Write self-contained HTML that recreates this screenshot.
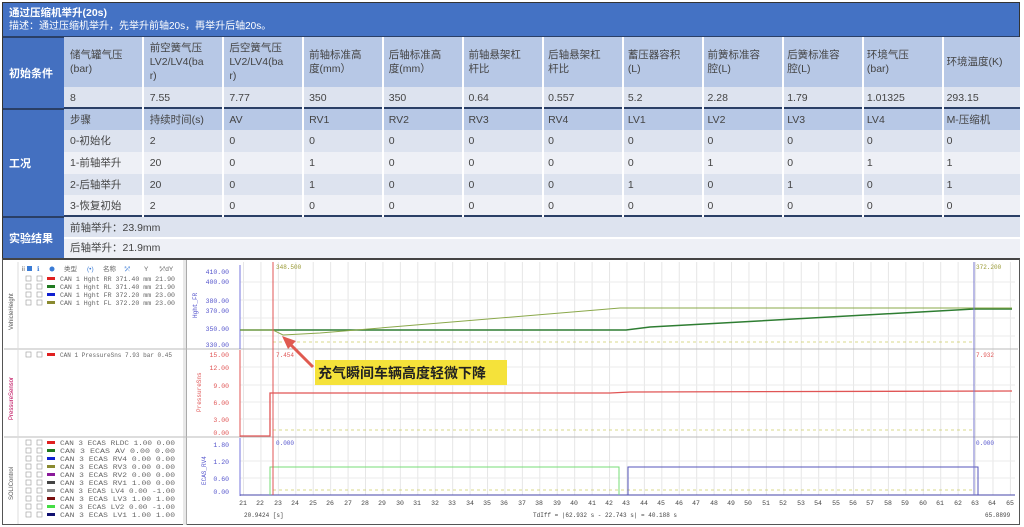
<!DOCTYPE html>
<html><head><meta charset="utf-8"><style>
*{margin:0;padding:0;box-sizing:border-box}
body{width:1024px;height:527px;background:#fff;position:relative;overflow:hidden;font-family:"Liberation Sans","Noto Sans CJK SC",sans-serif}
.t{position:absolute;left:2px;top:2px;width:1018px;height:256px;border:1px solid #333;background:#eef0f6}
.hd{position:absolute;left:0;top:0;width:1016px;height:35px;background:#4472c4;color:#fff;font-size:10px;line-height:13px;padding:4px 6px;border-bottom:2px solid #2a3f66}
.hd b{font-size:10.5px}
.lb{position:absolute;left:0;width:62px;background:#4470c0;color:#fff;font-size:11px;font-weight:bold;display:flex;align-items:center;padding-left:6px;border-bottom:2px solid #2a3f66}
</style></head><body>
<div class="t">
<div class="hd"><b>通过压缩机举升(20s)</b><br>描述：通过压缩机举升，先举升前轴20s，再举升后轴20s。</div>
<div class="lb" style="top:35px;height:72px">初始条件</div>
<div class="lb" style="top:107px;height:108px">工况</div>
<div class="lb" style="top:215px;height:40px;border-bottom:none">实验结果</div>
</div>
<div style="position:absolute;left:2px;top:258px;width:1018px;height:267px;border:1px solid #555;border-top:2px solid #444"></div>
<svg style="position:absolute;left:0;top:0" width="1024" height="527" font-family="Liberation Mono,monospace">
<defs>
<pattern id="vg" x="243" y="0" width="17.43" height="10" patternUnits="userSpaceOnUse"><line x1="0.5" y1="0" x2="0.5" y2="10" stroke="#e6e6e6" stroke-width="1"/></pattern>
</defs>
<rect x="186" y="260" width="1" height="265" fill="#aaa"/>
<rect x="183" y="260" width="3" height="265" fill="#e8e8e8"/>
<rect x="240" y="262" width="775" height="233" fill="url(#vg)"/>
<g stroke="#ebebeb">
<line x1="240" y1="282" x2="1015" y2="282"/><line x1="240" y1="300" x2="1015" y2="300"/><line x1="240" y1="318" x2="1015" y2="318"/><line x1="240" y1="336" x2="1015" y2="336"/>
<line x1="240" y1="367" x2="1015" y2="367"/><line x1="240" y1="385" x2="1015" y2="385"/><line x1="240" y1="402" x2="1015" y2="402"/><line x1="240" y1="419" x2="1015" y2="419"/>
<line x1="240" y1="461" x2="1015" y2="461"/><line x1="240" y1="478" x2="1015" y2="478"/>
</g>
<g stroke="#bbb"><line x1="4" y1="349" x2="1018" y2="349"/><line x1="4" y1="437" x2="1018" y2="437"/></g>
<line x1="240" y1="265" x2="240" y2="349" stroke="#7777dd"/>
<line x1="240" y1="350" x2="240" y2="437" stroke="#e05555"/>
<line x1="240" y1="438" x2="240" y2="496" stroke="#7777dd"/>
<line x1="240" y1="495" x2="1015" y2="495" stroke="#4444aa"/>
<g font-size="6.5" fill="#5555cc" text-anchor="end">
<text x="229" y="274">410.00</text><text x="229" y="284">400.00</text><text x="229" y="303">380.00</text><text x="229" y="313">370.00</text><text x="229" y="331">350.00</text><text x="229" y="347">330.00</text>
<text x="229" y="447">1.80</text><text x="229" y="464">1.20</text><text x="229" y="481">0.60</text><text x="229" y="494">0.00</text>
</g>
<g font-size="6.5" fill="#e05555" text-anchor="end">
<text x="229" y="357">15.00</text><text x="229" y="370">12.00</text><text x="229" y="388">9.00</text><text x="229" y="405">6.00</text><text x="229" y="422">3.00</text><text x="229" y="435">0.00</text>
</g>
<text transform="translate(197,318) rotate(-90)" font-size="6" fill="#5555cc">Hght_FR</text>
<text transform="translate(201,412) rotate(-90)" font-size="6" fill="#e05555">PressureSns</text>
<text transform="translate(206,485) rotate(-90)" font-size="6" fill="#5555cc">ECAS_RV4</text>
<g stroke="#cccc66" stroke-dasharray="3,3" stroke-width="0.8"><line x1="273" y1="342" x2="974" y2="342"/><line x1="273" y1="430" x2="974" y2="430"/><line x1="273" y1="490" x2="974" y2="490"/></g>
<polyline points="240,330 626,330 650,327 974,309 1012,309" fill="none" stroke="#2e7d32" stroke-width="1.5"/>
<polyline points="240,330 273,330 283,335 320,333 620,308 1012,308" fill="none" stroke="#8aa84a" stroke-width="1"/>
<polyline points="240,436 270,436 270,393 610,393 630,392 1012,391" fill="none" stroke="#e05555" stroke-width="1.3"/>
<polyline points="270,495 270,467 619,467 619,495" fill="none" stroke="#77dd77" stroke-width="1"/>
<polyline points="628,495 628,467 978,467 978,495" fill="none" stroke="#5555bb" stroke-width="1"/>
<line x1="273" y1="262" x2="273" y2="495" stroke="#e05555"/>
<line x1="974" y1="262" x2="974" y2="495" stroke="#7777cc"/>
<g font-size="6"><text x="276" y="269" fill="#999933">348.500</text><text x="976" y="269" fill="#999933">372.200</text><text x="276" y="357" fill="#e05555">7.454</text><text x="976" y="357" fill="#e05555">7.932</text><text x="276" y="445" fill="#5555cc">0.000</text><text x="976" y="445" fill="#5555cc">0.000</text></g>
<g font-size="6.5" fill="#444" text-anchor="middle">
<text x="243" y="505">21</text><text x="260" y="505">22</text><text x="278" y="505">23</text><text x="295" y="505">24</text><text x="313" y="505">25</text><text x="330" y="505">26</text><text x="348" y="505">27</text><text x="365" y="505">28</text><text x="382" y="505">29</text><text x="400" y="505">30</text><text x="417" y="505">31</text><text x="435" y="505">32</text><text x="452" y="505">33</text><text x="470" y="505">34</text><text x="487" y="505">35</text><text x="504" y="505">36</text><text x="522" y="505">37</text><text x="539" y="505">38</text><text x="557" y="505">39</text><text x="574" y="505">40</text><text x="592" y="505">41</text><text x="609" y="505">42</text><text x="626" y="505">43</text><text x="644" y="505">44</text><text x="661" y="505">45</text><text x="679" y="505">46</text><text x="696" y="505">47</text><text x="714" y="505">48</text><text x="731" y="505">49</text><text x="748" y="505">50</text><text x="766" y="505">51</text><text x="783" y="505">52</text><text x="801" y="505">53</text><text x="818" y="505">54</text><text x="836" y="505">55</text><text x="853" y="505">56</text><text x="870" y="505">57</text><text x="888" y="505">58</text><text x="905" y="505">59</text><text x="923" y="505">60</text><text x="940" y="505">61</text><text x="958" y="505">62</text><text x="975" y="505">63</text><text x="992" y="505">64</text><text x="1010" y="505">65</text>
</g>
<g font-size="6" fill="#444"><text x="244" y="517">20.9424 [s]</text><text x="533" y="517">TdIff = |62.932 s - 22.743 s| = 40.188 s</text><text x="985" y="517">65.8899</text></g>
<rect x="315" y="360" width="192" height="25" fill="#f5e23a"/>
<text x="318" y="378" font-family="Liberation Sans,Noto Sans CJK SC,sans-serif" font-size="14" font-weight="bold" fill="#222">充气瞬间车辆高度轻微下降</text>
<line x1="313" y1="367" x2="289" y2="343" stroke="#e05a50" stroke-width="3"/>
<polygon points="282,336 296,341 288,349" fill="#e05a50"/>
<text transform="translate(13,330) rotate(-90)" font-size="6" fill="#555" font-family="Liberation Sans,sans-serif">VehicleHeight</text>
<text transform="translate(13,420) rotate(-90)" font-size="6" fill="#b05" font-family="Liberation Sans,sans-serif">PressureSensor</text>
<text transform="translate(13,500) rotate(-90)" font-size="6" fill="#555" font-family="Liberation Sans,sans-serif">SOLIControl</text>
<line x1="18" y1="262" x2="18" y2="524" stroke="#ddd"/>
<g font-size="6.5" fill="#666" font-family="Liberation Sans,Noto Sans CJK SC,sans-serif">
<rect x="27" y="266" width="5" height="5" fill="#3a7bd5"/><text x="20" y="271">ⅱ</text><text x="37" y="271" fill="#3a7bd5">ℹ</text><circle cx="52" cy="269" r="2.5" fill="#3a7bd5"/><text x="64" y="271">类型</text><text x="87" y="271" fill="#3a7bd5">(•)</text><text x="103" y="271">名称</text><text x="125" y="271" fill="#3a7bd5">⤱</text><text x="144" y="271">Y</text><text x="160" y="271">⤱dY</text>
</g>
<g font-size="6.5" fill="#666" lengthAdjust="spacingAndGlyphs">
<rect x="26" y="276" width="5" height="5" fill="none" stroke="#999" stroke-width=".6"/><rect x="37" y="276" width="5" height="5" fill="none" stroke="#999" stroke-width=".6"/>
<rect x="47" y="277" width="8" height="3" fill="#e02020"/><text x="60" y="281" textLength="115" lengthAdjust="spacingAndGlyphs">CAN 1  Hght RR    371.40 mm 21.90</text>
<rect x="26" y="284" width="5" height="5" fill="none" stroke="#999" stroke-width=".6"/><rect x="37" y="284" width="5" height="5" fill="none" stroke="#999" stroke-width=".6"/>
<rect x="47" y="285" width="8" height="3" fill="#207a20"/><text x="60" y="289" textLength="115" lengthAdjust="spacingAndGlyphs">CAN 1  Hght RL    371.40 mm 21.90</text>
<rect x="26" y="292" width="5" height="5" fill="none" stroke="#999" stroke-width=".6"/><rect x="37" y="292" width="5" height="5" fill="none" stroke="#999" stroke-width=".6"/>
<rect x="47" y="293" width="8" height="3" fill="#1020d0"/><text x="60" y="297" textLength="115" lengthAdjust="spacingAndGlyphs">CAN 1  Hght FR    372.20 mm 23.00</text>
<rect x="26" y="300" width="5" height="5" fill="none" stroke="#999" stroke-width=".6"/><rect x="37" y="300" width="5" height="5" fill="none" stroke="#999" stroke-width=".6"/>
<rect x="47" y="301" width="8" height="3" fill="#8a8a30"/><text x="60" y="305" textLength="115" lengthAdjust="spacingAndGlyphs">CAN 1  Hght FL    372.20 mm 23.00</text>
<rect x="26" y="352" width="5" height="5" fill="none" stroke="#999" stroke-width=".6"/><rect x="37" y="352" width="5" height="5" fill="none" stroke="#999" stroke-width=".6"/>
<rect x="47" y="353" width="8" height="3" fill="#e02020"/><text x="60" y="357" textLength="112" lengthAdjust="spacingAndGlyphs">CAN 1  PressureSns 7.93 bar    0.45</text>
</g>
<g font-size="6.5" fill="#666">
<rect x="26" y="440" width="5" height="5" fill="none" stroke="#999" stroke-width=".6"/><rect x="37" y="440" width="5" height="5" fill="none" stroke="#999" stroke-width=".6"/><rect x="47" y="441" width="8" height="3" fill="#e02020"/><text x="60" y="445" textLength="115" lengthAdjust="spacingAndGlyphs">CAN 3  ECAS  RLDC  1.00        0.00</text>
<rect x="26" y="448" width="5" height="5" fill="none" stroke="#999" stroke-width=".6"/><rect x="37" y="448" width="5" height="5" fill="none" stroke="#999" stroke-width=".6"/><rect x="47" y="449" width="8" height="3" fill="#207a20"/><text x="60" y="453" textLength="115" lengthAdjust="spacingAndGlyphs">CAN 3  ECAS  AV    0.00        0.00</text>
<rect x="26" y="456" width="5" height="5" fill="none" stroke="#999" stroke-width=".6"/><rect x="37" y="456" width="5" height="5" fill="none" stroke="#999" stroke-width=".6"/><rect x="47" y="457" width="8" height="3" fill="#1020d0"/><text x="60" y="461" textLength="115" lengthAdjust="spacingAndGlyphs">CAN 3  ECAS  RV4   0.00        0.00</text>
<rect x="26" y="464" width="5" height="5" fill="none" stroke="#999" stroke-width=".6"/><rect x="37" y="464" width="5" height="5" fill="none" stroke="#999" stroke-width=".6"/><rect x="47" y="465" width="8" height="3" fill="#8a8a30"/><text x="60" y="469" textLength="115" lengthAdjust="spacingAndGlyphs">CAN 3  ECAS  RV3   0.00        0.00</text>
<rect x="26" y="472" width="5" height="5" fill="none" stroke="#999" stroke-width=".6"/><rect x="37" y="472" width="5" height="5" fill="none" stroke="#999" stroke-width=".6"/><rect x="47" y="473" width="8" height="3" fill="#8a1a9a"/><text x="60" y="477" textLength="115" lengthAdjust="spacingAndGlyphs">CAN 3  ECAS  RV2   0.00        0.00</text>
<rect x="26" y="480" width="5" height="5" fill="none" stroke="#999" stroke-width=".6"/><rect x="37" y="480" width="5" height="5" fill="none" stroke="#999" stroke-width=".6"/><rect x="47" y="481" width="8" height="3" fill="#444"/><text x="60" y="485" textLength="115" lengthAdjust="spacingAndGlyphs">CAN 3  ECAS  RV1   1.00        0.00</text>
<rect x="26" y="488" width="5" height="5" fill="none" stroke="#999" stroke-width=".6"/><rect x="37" y="488" width="5" height="5" fill="none" stroke="#999" stroke-width=".6"/><rect x="47" y="489" width="8" height="3" fill="#888"/><text x="60" y="493" textLength="115" lengthAdjust="spacingAndGlyphs">CAN 3  ECAS  LV4   0.00       -1.00</text>
<rect x="26" y="496" width="5" height="5" fill="none" stroke="#999" stroke-width=".6"/><rect x="37" y="496" width="5" height="5" fill="none" stroke="#999" stroke-width=".6"/><rect x="47" y="497" width="8" height="3" fill="#7a1010"/><text x="60" y="501" textLength="115" lengthAdjust="spacingAndGlyphs">CAN 3  ECAS  LV3   1.00        1.00</text>
<rect x="26" y="504" width="5" height="5" fill="none" stroke="#999" stroke-width=".6"/><rect x="37" y="504" width="5" height="5" fill="none" stroke="#999" stroke-width=".6"/><rect x="47" y="505" width="8" height="3" fill="#44dd44"/><text x="60" y="509" textLength="115" lengthAdjust="spacingAndGlyphs">CAN 3  ECAS  LV2   0.00       -1.00</text>
<rect x="26" y="512" width="5" height="5" fill="none" stroke="#999" stroke-width=".6"/><rect x="37" y="512" width="5" height="5" fill="none" stroke="#999" stroke-width=".6"/><rect x="47" y="513" width="8" height="3" fill="#101070"/><text x="60" y="517" textLength="115" lengthAdjust="spacingAndGlyphs">CAN 3  ECAS  LV1   1.00        1.00</text>
</g>
</svg>
<div style="position:absolute;left:2px;top:2px">
<div style="position:absolute;left:62px;top:35px;width:956px;height:50px;background:#b7c8e6"></div>
<div style="position:absolute;left:62px;top:85px;width:956px;height:22px;background:#dde3ef;border-bottom:2px solid #2a3f66"></div>
<div style="position:absolute;left:62px;top:107px;width:956px;height:21px;background:#b7c8e6"></div>
<div style="position:absolute;left:62px;top:128px;width:956px;height:22px;background:#dde3ef"></div>
<div style="position:absolute;left:62px;top:150px;width:956px;height:22px;background:#eef0f6"></div>
<div style="position:absolute;left:62px;top:172px;width:956px;height:21px;background:#dde3ef"></div>
<div style="position:absolute;left:62px;top:193px;width:956px;height:22px;background:#eef0f6;border-bottom:2px solid #2a3f66"></div>
<div style="position:absolute;left:62px;top:215px;width:956px;height:22px;background:#dde3ef;border-bottom:2px solid #fff"></div>
<div style="position:absolute;left:62px;top:237px;width:956px;height:19px;background:#eef0f6"></div>
<div style="position:absolute;left:62px;top:35px;width:956px;height:180px;background:repeating-linear-gradient(90deg,transparent 0,transparent 78px,#fff 78px,#fff 80px)"></div>
<div style="position:absolute;left:62px;top:35px;width:956px;font-size:10.5px;color:#444;line-height:14px">
<div style="display:grid;grid-template-columns:repeat(12,79.7px);height:50px;align-items:center">
<div style="padding-left:6px">储气罐气压<br>(bar)</div><div style="padding-left:6px">前空簧气压<br>LV2/LV4(ba<br>r)</div><div style="padding-left:6px">后空簧气压<br>LV2/LV4(ba<br>r)</div><div style="padding-left:6px">前轴标准高<br>度(mm）</div><div style="padding-left:6px">后轴标准高<br>度(mm）</div><div style="padding-left:6px">前轴悬架杠<br>杆比</div><div style="padding-left:6px">后轴悬架杠<br>杆比</div><div style="padding-left:6px">蓄压器容积<br>(L)</div><div style="padding-left:6px">前簧标准容<br>腔(L)</div><div style="padding-left:6px">后簧标准容<br>腔(L)</div><div style="padding-left:6px">环境气压<br>(bar)</div><div style="padding-left:6px">环境温度(K)</div>
</div>
<div style="display:grid;grid-template-columns:repeat(12,79.7px);height:22px;align-items:center"><div style="padding-left:6px">8</div><div style="padding-left:6px">7.55</div><div style="padding-left:6px">7.77</div><div style="padding-left:6px">350</div><div style="padding-left:6px">350</div><div style="padding-left:6px">0.64</div><div style="padding-left:6px">0.557</div><div style="padding-left:6px">5.2</div><div style="padding-left:6px">2.28</div><div style="padding-left:6px">1.79</div><div style="padding-left:6px">1.01325</div><div style="padding-left:6px">293.15</div></div>
<div style="display:grid;grid-template-columns:repeat(12,79.7px);height:21px;align-items:center"><div style="padding-left:6px">步骤</div><div style="padding-left:6px">持续时间(s)</div><div style="padding-left:6px">AV</div><div style="padding-left:6px">RV1</div><div style="padding-left:6px">RV2</div><div style="padding-left:6px">RV3</div><div style="padding-left:6px">RV4</div><div style="padding-left:6px">LV1</div><div style="padding-left:6px">LV2</div><div style="padding-left:6px">LV3</div><div style="padding-left:6px">LV4</div><div style="padding-left:6px">M-压缩机</div></div>
<div style="display:grid;grid-template-columns:repeat(12,79.7px);height:22px;align-items:center"><div style="padding-left:6px">0-初始化</div><div style="padding-left:6px">2</div><div style="padding-left:6px">0</div><div style="padding-left:6px">0</div><div style="padding-left:6px">0</div><div style="padding-left:6px">0</div><div style="padding-left:6px">0</div><div style="padding-left:6px">0</div><div style="padding-left:6px">0</div><div style="padding-left:6px">0</div><div style="padding-left:6px">0</div><div style="padding-left:6px">0</div></div>
<div style="display:grid;grid-template-columns:repeat(12,79.7px);height:22px;align-items:center"><div style="padding-left:6px">1-前轴举升</div><div style="padding-left:6px">20</div><div style="padding-left:6px">0</div><div style="padding-left:6px">1</div><div style="padding-left:6px">0</div><div style="padding-left:6px">0</div><div style="padding-left:6px">0</div><div style="padding-left:6px">0</div><div style="padding-left:6px">1</div><div style="padding-left:6px">0</div><div style="padding-left:6px">1</div><div style="padding-left:6px">1</div></div>
<div style="display:grid;grid-template-columns:repeat(12,79.7px);height:21px;align-items:center"><div style="padding-left:6px">2-后轴举升</div><div style="padding-left:6px">20</div><div style="padding-left:6px">0</div><div style="padding-left:6px">1</div><div style="padding-left:6px">0</div><div style="padding-left:6px">0</div><div style="padding-left:6px">0</div><div style="padding-left:6px">1</div><div style="padding-left:6px">0</div><div style="padding-left:6px">1</div><div style="padding-left:6px">0</div><div style="padding-left:6px">1</div></div>
<div style="display:grid;grid-template-columns:repeat(12,79.7px);height:22px;align-items:center"><div style="padding-left:6px">3-恢复初始</div><div style="padding-left:6px">2</div><div style="padding-left:6px">0</div><div style="padding-left:6px">0</div><div style="padding-left:6px">0</div><div style="padding-left:6px">0</div><div style="padding-left:6px">0</div><div style="padding-left:6px">0</div><div style="padding-left:6px">0</div><div style="padding-left:6px">0</div><div style="padding-left:6px">0</div><div style="padding-left:6px">0</div></div>
<div style="height:22px;line-height:22px;padding-left:6px">前轴举升：23.9mm</div>
<div style="height:19px;line-height:19px;padding-left:6px">后轴举升：21.9mm</div>
</div>
</div>
</body></html>
